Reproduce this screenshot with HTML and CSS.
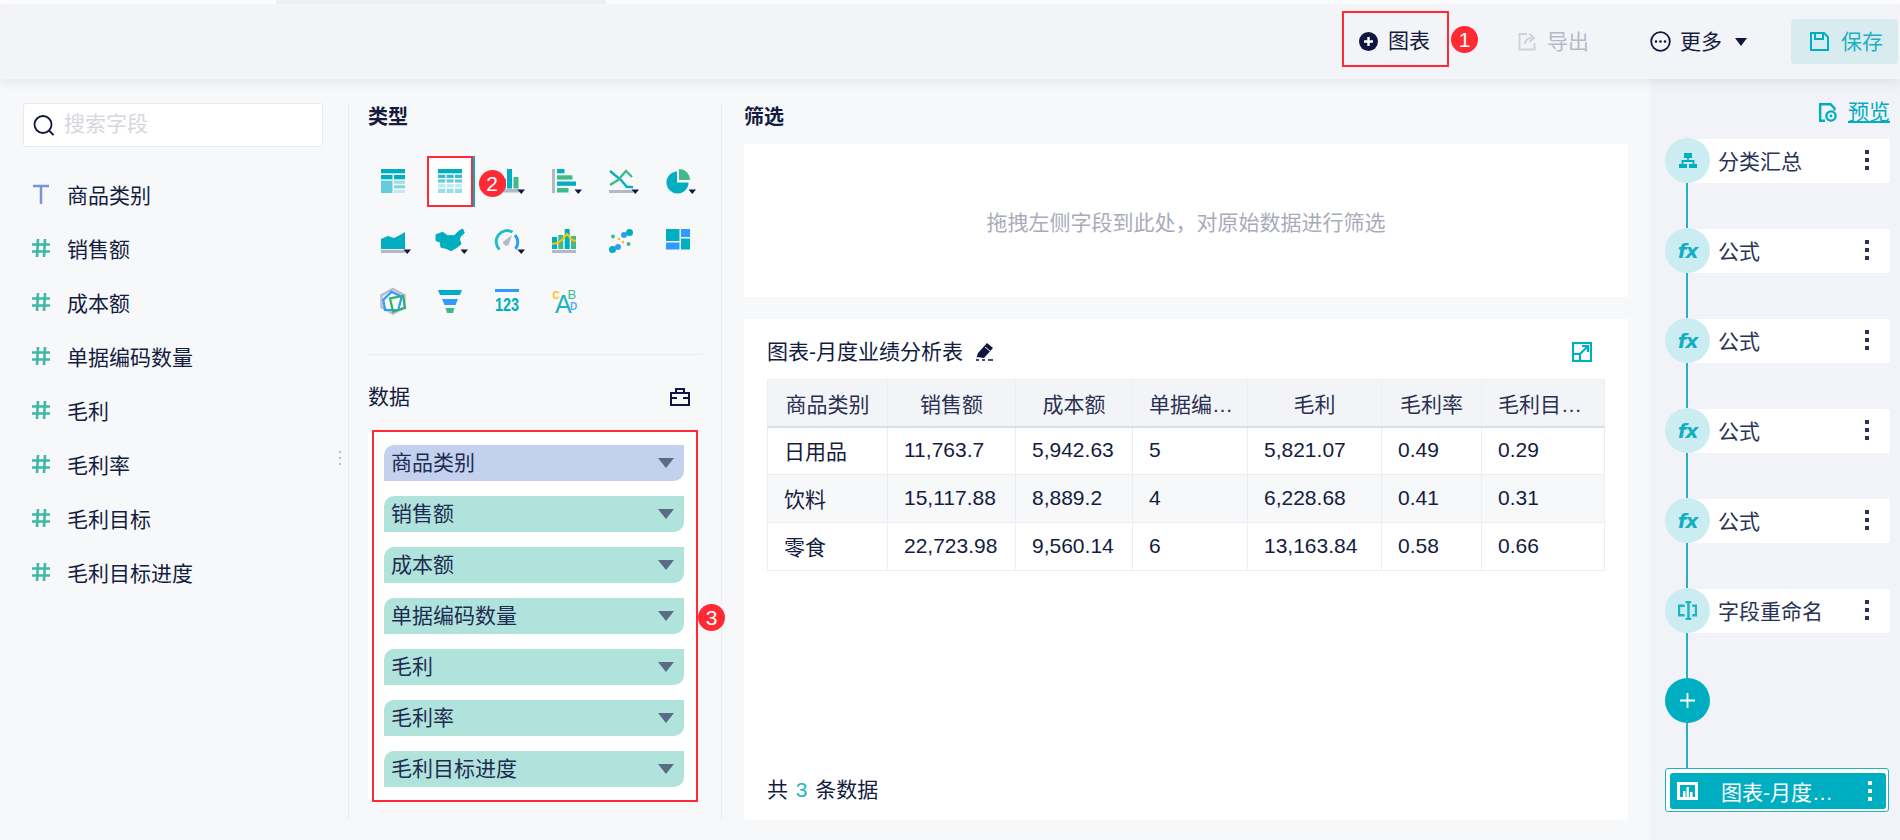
FILE: index.html
```html
<!DOCTYPE html>
<html lang="zh-CN">
<head>
<meta charset="utf-8">
<title>图表-月度业绩分析表</title>
<link rel="stylesheet" href="styles.css">
</head>
<body>
<div class="app">
  <div class="strip"><div class="strip-tab"></div></div>
  <header class="topbar">
    <button class="tool add">
      <svg class="ic-add" viewBox="0 0 19 19"><circle cx="9.5" cy="9.5" r="9.5" fill="#10163f"/><path d="M9.5 5v9M5 9.5h9" stroke="#fff" stroke-width="2.4"/></svg>
      <span>图表</span>
      <b class="badge badge-1">1</b>
    </button>
    <button class="tool export">
      <svg class="ic-export" viewBox="0 0 18 19" fill="none" stroke="#cfd2da" stroke-width="2"><path d="M9 2H1.500v15.500H16.500V11"/><path d="M7 12c0-4 2.500-6 7-6M11.500 2l4.500 4-4.500 4"/></svg>
      <span>导出</span>
    </button>
    <button class="tool more">
      <svg class="ic-more" viewBox="0 0 21 21"><circle cx="10.500" cy="10.500" r="9.300" fill="none" stroke="#10163f" stroke-width="1.800"/><circle cx="6" cy="10.500" r="1.300" fill="#10163f"/><circle cx="10.500" cy="10.500" r="1.300" fill="#10163f"/><circle cx="15" cy="10.500" r="1.300" fill="#10163f"/></svg>
      <span>更多</span>
      <i class="caret"></i>
    </button>
    <button class="tool save">
      <svg class="ic-save" viewBox="0 0 19 19" fill="none" stroke="#00aec1" stroke-width="2"><path d="M1 1h13l4 4v13H1z"/><path d="M5 1v6h8V1"/></svg>
      <span>保存</span>
    </button>
  </header>

  <div class="body">
    <div class="workspace">
      <aside class="fields">
        <div class="search">
          <svg class="ic-search" viewBox="0 0 21 21" fill="none" stroke="#10163f" stroke-width="1.800"><circle cx="10" cy="9.500" r="8.500"/><path d="M16 15.500l4.500 4.500"/></svg>
          <input class="search-input" placeholder="搜索字段">
        </div>
        <ul class="field-list">
          <li class="field"><svg class="ic-field" viewBox="0 0 18 20"><path d="M1 2h16M9 2v18" stroke="#7b93db" stroke-width="2.500" fill="none"/></svg>商品类别</li>
          <li class="field"><svg class="ic-field" viewBox="0 0 18 20"><path d="M6 1L5 19M13 1l-1 18M0 6.500h18M0 13.500h18" stroke="#3fb8a9" stroke-width="2.600" fill="none"/></svg>销售额</li>
          <li class="field"><svg class="ic-field" viewBox="0 0 18 20"><path d="M6 1L5 19M13 1l-1 18M0 6.500h18M0 13.500h18" stroke="#3fb8a9" stroke-width="2.600" fill="none"/></svg>成本额</li>
          <li class="field"><svg class="ic-field" viewBox="0 0 18 20"><path d="M6 1L5 19M13 1l-1 18M0 6.500h18M0 13.500h18" stroke="#3fb8a9" stroke-width="2.600" fill="none"/></svg>单据编码数量</li>
          <li class="field"><svg class="ic-field" viewBox="0 0 18 20"><path d="M6 1L5 19M13 1l-1 18M0 6.500h18M0 13.500h18" stroke="#3fb8a9" stroke-width="2.600" fill="none"/></svg>毛利</li>
          <li class="field"><svg class="ic-field" viewBox="0 0 18 20"><path d="M6 1L5 19M13 1l-1 18M0 6.500h18M0 13.500h18" stroke="#3fb8a9" stroke-width="2.600" fill="none"/></svg>毛利率</li>
          <li class="field"><svg class="ic-field" viewBox="0 0 18 20"><path d="M6 1L5 19M13 1l-1 18M0 6.500h18M0 13.500h18" stroke="#3fb8a9" stroke-width="2.600" fill="none"/></svg>毛利目标</li>
          <li class="field"><svg class="ic-field" viewBox="0 0 18 20"><path d="M6 1L5 19M13 1l-1 18M0 6.500h18M0 13.500h18" stroke="#3fb8a9" stroke-width="2.600" fill="none"/></svg>毛利目标进度</li>
        </ul>
        <span class="handle"></span>
      </aside>

      <section class="config">
        <h2 class="heading">类型</h2>
        <div class="types">
          <div class="type"><svg class="chart" viewBox="0 0 24 24"><rect class="t" width="24" height="4.300"/><rect class="t" y="6" width="11.500" height="4.300"/><rect class="t" x="13" y="6" width="11" height="4.300"/><rect class="t3" y="11.700" width="11.500" height="12.300"/><rect class="t5" x="13" y="11.700" width="11" height="3"/><rect class="t4" x="13" y="16.300" width="11" height="3"/><rect class="t6" x="13" y="21" width="11" height="3"/></svg></div>
          <div class="type"><div class="picked"><svg class="chart" viewBox="0 0 24 24"><rect class="t" width="24" height="4.300"/><rect class="t2" y="5.700" width="7.300" height="3.300"/><rect class="t2" x="8.600" y="5.700" width="7" height="3.300"/><rect class="t2" x="17" y="5.700" width="7" height="3.300"/><rect class="t3" y="10.300" width="7.300" height="3.300"/><rect class="t3" x="8.600" y="10.300" width="7" height="3.300"/><rect class="t3" x="17" y="10.300" width="7" height="3.300"/><rect class="t6" y="15" width="7.300" height="3.300"/><rect class="t6" x="8.600" y="15" width="7" height="3.300"/><rect class="t6" x="17" y="15" width="7" height="3.300"/><rect class="t5" y="19.700" width="7.300" height="4.300"/><rect class="t5" x="8.600" y="19.700" width="7" height="4.300"/><rect class="t5" x="17" y="19.700" width="7" height="4.300"/></svg><b class="badge badge-2">2</b></div></div>
          <div class="type"><svg class="chart" viewBox="0 0 24 24"><rect class="t" x="6" y="10" width="5" height="9.500"/><rect class="t" x="12" width="5" height="19.500"/><rect class="g" x="18.500" y="8" width="5" height="11.500"/><rect class="a" y="20" width="24" height="3.500"/><polygon class="n" points="22.500,20.500 30,20.500 26.250,25"/></svg></div>
          <div class="type"><svg class="chart" viewBox="0 0 24 24"><rect class="a" width="3" height="24"/><rect class="t" x="5" width="7.500" height="4.300"/><rect class="g" x="5" y="6.300" width="15.500" height="4.300"/><rect class="t" x="5" y="12.500" width="19" height="4.300"/><rect class="g" x="5" y="19" width="11.500" height="4.500"/><polygon class="n" points="22.500,20.500 30,20.500 26.250,25"/></svg></div>
          <div class="type"><svg class="chart" viewBox="0 0 24 24"><path d="M1 2l11 9 6 7h6" fill="none" stroke="#00aec1" stroke-width="2.400"/><path d="M1 16l8-5 8-9 6 6" fill="none" stroke="#3fbb8a" stroke-width="2.400"/><rect class="a" y="21" width="24" height="3"/><polygon class="n" points="22.500,20.500 30,20.500 26.250,25"/></svg></div>
          <div class="type"><svg class="chart" viewBox="0 0 24 24"><path class="t" d="M11 2.500A11 11 0 1 0 22.500 13.500H11z"/><path class="g" d="M13 0a11 11 0 0 1 11 11H13z"/><polygon class="n" points="22.500,20.500 30,20.500 26.250,25"/></svg></div>
          <div class="type"><svg class="chart" viewBox="0 0 24 24"><path class="t" d="M0 10l7-3 6 2 7-3.500 4-2.500v17H0z"/><rect class="a" y="21" width="24" height="3"/><polygon class="n" points="22.500,20.500 30,20.500 26.250,25"/></svg></div>
          <div class="type"><svg class="chart" viewBox="0 0 24 24"><path class="t map" d="M-2 5.700L4.700 3.300L9.700 6.700L16.300 6.700L21.300 1.700L24.700 0L26.300 4L23 6.700L21.300 10L23 15L19 18.300L13 21.700L8 19.300L3 18.300L2.300 13L-2 11.700Z"/><polygon class="n" points="22.500,20.500 30,20.500 26.250,25"/></svg></div>
          <div class="type"><svg class="chart" viewBox="0 0 24 24"><path d="M4.500 20.500A11 11 0 0 1 17.500 3" fill="none" stroke="#1fbdc9" stroke-width="3"/><path d="M20 6A11 11 0 0 1 20.500 20" fill="none" stroke="#2e9bff" stroke-width="3"/><path d="M8 13L17 6L13.500 16A3.500 3.500 0 0 1 8 13z" fill="#b4b7c5"/><polygon class="n" points="22.500,20.500 30,20.500 26.250,25"/></svg></div>
          <div class="type"><svg class="chart" viewBox="0 0 24 24"><rect class="t" y="8" width="5" height="12"/><rect class="g" x="6.300" y="6" width="5" height="14"/><rect class="t" x="12.700" width="5" height="20"/><rect class="g" x="19" y="7" width="5" height="13"/><path d="M0 15l5-1 5-3 5-6 5 6 4 1" fill="none" stroke="#ffc107" stroke-width="2"/><rect class="a" y="21" width="24" height="3"/></svg></div>
          <div class="type"><svg class="chart" viewBox="0 0 24 24"><circle class="t" cx="20.500" cy="3.500" r="3.500"/><circle cx="15" cy="6" r="3" fill="#2e9bff"/><circle class="t" cx="3.500" cy="20.500" r="3.500"/><circle cx="9" cy="18" r="3" fill="#2e9bff"/><circle class="g" cx="4" cy="7.500" r="2"/><circle class="g" cx="19.500" cy="15" r="2"/><circle cx="10" cy="10" r="1.300" fill="#ffc107"/><circle cx="14" cy="13" r="1.300" fill="#ffc107"/></svg></div>
          <div class="type"><svg class="chart" viewBox="0 0 24 24"><rect class="t" width="13.500" height="12"/><rect x="15" width="9" height="8" fill="#2e9bff"/><rect y="13.500" width="13.500" height="7" fill="#2e9bff"/><rect class="t" x="15" y="9.500" width="9" height="11"/></svg></div>
          <div class="type"><svg class="chart" viewBox="0 0 24 24" fill="none"><polygon points="12,0 23.500,6.300 23.500,18 12,24.500 0.500,18 0.500,6.300" stroke="#b9bcca" stroke-width="2.500"/><polygon points="10.700,2.700 20.700,7.700 17.300,21 4,21 2.300,11" stroke="#2e9bff" stroke-width="2.200"/><polygon points="9,9.300 22,7 24,19 12,22.500" stroke="#2eb46a" stroke-width="2.200"/></svg></div>
          <div class="type"><svg class="chart" viewBox="0 0 24 24"><polygon class="t" points="0,1 24,1 22,6 2,6"/><polygon points="4,10 20,10 17.500,16 6.500,16" fill="#2e9bff"/><polygon class="g" points="7.500,19 16.500,19 15,24 9,24"/></svg></div>
          <div class="type"><svg class="chart" viewBox="0 0 24 24"><rect width="24" height="3" fill="#2e9bff"/><text class="num" x="0" y="22" textLength="24" lengthAdjust="spacingAndGlyphs">123</text></svg></div>
          <div class="type"><svg class="chart" viewBox="0 0 24 24"><text class="abc-c" x="0.500" y="10.300">C</text><text class="abc-a" x="3" y="23.500">A</text><text class="abc-b" x="15.600" y="10.300">B</text><text class="abc-d" x="18" y="21">D</text></svg></div>
        </div>
        <hr class="rule">
        <div class="data-head">
          <h2 class="heading plain">数据</h2>
          <svg class="ic-box" viewBox="0 0 20 18" fill="none" stroke="#10163f" stroke-width="2"><path d="M1 5h18v12H1zM6 5V1h8v4M1 10h6M13 10h6"/></svg>
        </div>
        <div class="data-wrap">
          <div class="data-box">
            <div class="pill dim">商品类别<i class="pill-caret"></i></div>
            <div class="pill">销售额<i class="pill-caret"></i></div>
            <div class="pill">成本额<i class="pill-caret"></i></div>
            <div class="pill">单据编码数量<i class="pill-caret"></i></div>
            <div class="pill">毛利<i class="pill-caret"></i></div>
            <div class="pill">毛利率<i class="pill-caret"></i></div>
            <div class="pill">毛利目标进度<i class="pill-caret"></i></div>
            <b class="badge badge-3">3</b>
          </div>
        </div>
      </section>

      <section class="stage">
        <h2 class="heading">筛选</h2>
        <div class="filter">拖拽左侧字段到此处，对原始数据进行筛选</div>
        <div class="card">
          <div class="card-head">
            <span>图表-月度业绩分析表</span>
            <svg class="ic-edit" viewBox="0 0 20 18"><path d="M12 0l6 5-9 10-7-1-1 2 2-6z" fill="#10163f"/><path d="M10 4l5 4" stroke="#fff" stroke-width="1"/><path d="M1 17h3M7 17h3M13 17h5" stroke="#10163f" stroke-width="1.500"/></svg>
            <svg class="ic-expand" viewBox="0 0 20 20" fill="none" stroke="#00aec1" stroke-width="2.200"><rect x="1" y="1" width="18" height="18"/><path d="M1 12h7v7M8 12l8-8M10 4h6v6"/></svg>
          </div>
          <table class="grid">
            <colgroup><col class="c1"><col class="c2"><col class="c3"><col class="c4"><col class="c5"><col class="c6"><col class="c7"></colgroup>
            <thead><tr><th>商品类别</th><th>销售额</th><th>成本额</th><th class="clip">单据编码数量</th><th>毛利</th><th>毛利率</th><th class="clip">毛利目标进度</th></tr></thead>
            <tbody>
              <tr><td>日用品</td><td>11,763.7</td><td>5,942.63</td><td>5</td><td>5,821.07</td><td>0.49</td><td>0.29</td></tr>
              <tr><td>饮料</td><td>15,117.88</td><td>8,889.2</td><td>4</td><td>6,228.68</td><td>0.41</td><td>0.31</td></tr>
              <tr><td>零食</td><td>22,723.98</td><td>9,560.14</td><td>6</td><td>13,163.84</td><td>0.58</td><td>0.66</td></tr>
            </tbody>
          </table>
          <div class="total">共 <em>3</em> 条数据</div>
        </div>
      </section>
    </div>

    <aside class="flow">
      <a class="preview">
        <svg class="ic-preview" viewBox="0 0 19 19" fill="none" stroke="#00aec1" stroke-width="2.400"><path d="M6 17.800H1.200V1.200h10.300l4 4v2.300"/><circle cx="12" cy="13" r="4.600"/><circle cx="12" cy="13" r="1.400" fill="#00aec1" stroke="none"/></svg>
        <span>预览</span>
      </a>
      <div class="step">
        <span class="node"><svg class="ic-org" viewBox="0 0 18 15"><path d="M5 0h8v5H5zM0 11h8v4H0zM10 11h8v4h-8z" fill="#00aec1"/><path d="M9 5v3M3.500 11V8h11v3" fill="none" stroke="#00aec1" stroke-width="1.800"/></svg></span>
        <div class="step-card">分类汇总<i class="kebab"></i></div>
      </div>
      <span class="wire"></span>
      <div class="step"><span class="node fx">fx</span><div class="step-card">公式<i class="kebab"></i></div></div>
      <span class="wire"></span>
      <div class="step"><span class="node fx">fx</span><div class="step-card">公式<i class="kebab"></i></div></div>
      <span class="wire"></span>
      <div class="step"><span class="node fx">fx</span><div class="step-card">公式<i class="kebab"></i></div></div>
      <span class="wire"></span>
      <div class="step"><span class="node fx">fx</span><div class="step-card">公式<i class="kebab"></i></div></div>
      <span class="wire"></span>
      <div class="step">
        <span class="node"><svg class="ic-node" viewBox="0 0 20 20" fill="none" stroke="#1fb3c5" stroke-width="2.600"><path d="M7 5H1v10h6M15 5h4v10h-4M8 1h6M8 19h6M11 1v18"/></svg></span>
        <div class="step-card">字段重命名<i class="kebab"></i></div>
      </div>
      <span class="wire"></span>
      <button class="plus"><svg class="ic-plus" viewBox="0 0 15 15"><path d="M7.500 0v15M0 7.500h15" stroke="#fff" stroke-width="1.800"/></svg></button>
      <span class="wire"></span>
      <div class="output">
        <div class="output-in">
          <svg class="ic-out" viewBox="0 0 21 18"><path d="M0 0h21v18H0z" fill="#fff"/><path d="M3 3h15v12H3z" fill="#00aec1"/><path d="M6 9h2.500v6H6zM9.500 5h2.500v10H9.500zM13 10h2.500v5H13z" fill="#fff"/></svg>
          <span class="output-name">图表-月度业绩分析表</span>
          <i class="kebab light"></i>
        </div>
      </div>
    </aside>
  </div>
</div>
</body>
</html>
```
FILE: styles.css
```css
* { box-sizing: border-box; }
html, body { margin: 0; padding: 0; }
body {
  font-family: "Liberation Sans", "Noto Sans CJK SC", sans-serif;
  font-size: 21px;
  color: #141c40;
  background: #f7f8fa;
}
h2, ul { margin: 0; padding: 0; }
i, em { font-style: normal; }
button { font: inherit; color: inherit; background: none; border: 0; padding: 0; }

.app { width: 1900px; height: 840px; display: flex; flex-direction: column; overflow: hidden; }

.strip { height: 4px; background: #fff; flex: none; }
.strip-tab { width: 330px; height: 4px; margin-left: 276px; background: #f1f2f7; }

.topbar {
  position: relative;
  z-index: 3;
  height: 75px;
  flex: none;
  display: flex;
  align-items: center;
  justify-content: flex-end;
  padding-right: 2px;
  background: #f3f4f8;
  box-shadow: 0 3px 10px rgba(30, 40, 80, .09);
}
.tool { display: flex; align-items: center; line-height: 28px; }
.add {
  position: relative;
  width: 107px;
  height: 56px;
  margin-top: -5px;
  padding: 4px 0 0 15px;
  border: 2px solid #ff2a33;
  gap: 10px;
}
.ic-add { width: 19px; height: 19px; }
.export { margin-left: 69px; gap: 11px; color: #b6bac6; }
.ic-export { width: 18px; height: 19px; }
.more { margin-left: 61px; gap: 9px; }
.ic-more { width: 21px; height: 21px; }
.caret {
  width: 0; height: 0; margin-left: 4px;
  border-left: 6px solid transparent;
  border-right: 6px solid transparent;
  border-top: 8px solid #10163f;
}
.save {
  margin-left: 44px;
  width: 107px;
  height: 45px;
  padding-left: 19px;
  gap: 12px;
  color: #1cb0c3;
  background: #d8ecf0;
  border-radius: 4px;
}
.ic-save { width: 19px; height: 19px; }

.badge {
  position: absolute;
  z-index: 2;
  width: 27px;
  height: 27px;
  border-radius: 50%;
  background: #ff2a33;
  color: #fff;
  font-size: 21px;
  font-weight: 400;
  line-height: 27px;
  text-align: center;
}
.badge-1 { left: 107px; top: 13px; }
.badge-2 { left: 50px; top: 12px; }
.badge-3 { left: 324px; top: 172px; }

.body { flex: 1; min-height: 0; display: flex; }
.workspace { flex: 1; display: flex; padding: 24px 0 20px; min-width: 0; }

.fields { position: relative; width: 349px; flex: none; border-right: 1px solid #e9ebef; padding-left: 23px; }
.search {
  width: 300px;
  height: 44px;
  display: flex;
  align-items: center;
  gap: 10px;
  padding-left: 9px;
  background: #fff;
  border: 1px solid #e8e9ef;
  border-radius: 3px;
}
.ic-search { width: 21px; height: 21px; flex: none; }
.search-input { flex: 1; min-width: 0; margin-top: -3px; border: 0; outline: 0; padding: 0; background: none; font: inherit; }
.search-input::placeholder { color: #d5d7de; }
.field-list { list-style: none; margin-top: 20px; margin-left: 9px; }
.field { height: 54px; display: flex; align-items: center; gap: 17px; }
.ic-field { width: 18px; height: 20px; flex: none; }
.handle {
  position: absolute;
  left: 339px;
  top: 354px;
  width: 2px;
  height: 2px;
  background: #b9bcc6;
  box-shadow: 0 -6px 0 #b9bcc6, 0 6px 0 #b9bcc6;
}

.config { width: 373px; flex: none; border-right: 1px solid #e9ebef; padding-left: 19px; }
.heading { font-size: 20px; font-weight: 700; line-height: 28px; }
.heading.plain { font-size: 21px; font-weight: 400; }
.types {
  display: grid;
  grid-template-columns: repeat(6, 57px);
  grid-auto-rows: 60px;
  margin: 20px 0 0 -4px;
}
.type { display: flex; align-items: center; justify-content: center; }
.chart { width: 24px; height: 24px; overflow: visible; }
.picked {
  position: relative;
  width: 46px;
  height: 51px;
  display: flex;
  align-items: center;
  justify-content: center;
  background: #fff;
  border: 2px solid #ff2a33;
  box-shadow: 2px 0 0 #00aec1;
}
.t { fill: #00aec1; }
.t2 { fill: #2fbccb; }
.t3 { fill: #66ccd9; }
.t4 { fill: #7dd5dd; }
.t5 { fill: #99dfe6; }
.t6 { fill: #c0ecef; }
.g { fill: #3fbb8a; }
.a { fill: #b4b7c5; }
.n { fill: #10163f; }
.map { stroke: #00aec1; stroke-width: 1; stroke-linejoin: round; }
.num { font: 700 19px "Liberation Sans", sans-serif; fill: #00aec1; }
.abc-a { font: 400 25px "Liberation Sans", sans-serif; fill: #1fb3c5; }
.abc-b { font: 400 13px "Liberation Sans", sans-serif; fill: #3fbb8a; }
.abc-c { font: 700 10px "Liberation Sans", sans-serif; fill: #ffc107; }
.abc-d { font: 700 10px "Liberation Sans", sans-serif; fill: #5aa9ff; }

.rule { width: 334px; height: 1px; margin: 23px 0 0; border: 0; background: #eaecf0; }
.data-head { width: 322px; display: flex; align-items: center; justify-content: space-between; margin-top: 28px; }
.ic-box { width: 20px; height: 18px; }
.data-wrap { width: 330px; margin-top: 19px; padding: 0 0 1px 4px; background: #fff; }
.data-box {
  position: relative;
  width: 326px;
  height: 372px;
  display: flex;
  flex-direction: column;
  gap: 15px;
  padding: 13px 0 0 10px;
  border: 2px solid #ff2a33;
}
.pill {
  width: 300px;
  height: 36px;
  flex: none;
  display: flex;
  align-items: center;
  justify-content: space-between;
  padding: 0 10px 0 7px;
  line-height: 36px;
  background: #afe3dc;
  border-radius: 10px 0 10px 0;
  color: #1f2b50;
}
.pill.dim { background: #c3d1ef; }
.pill-caret {
  width: 0; height: 0;
  border-left: 8px solid transparent;
  border-right: 8px solid transparent;
  border-top: 10px solid #5a6b85;
}

.stage { width: 884px; flex: none; margin-left: 22px; display: flex; flex-direction: column; }
.filter {
  height: 153px;
  margin-top: 13px;
  display: flex;
  align-items: center;
  justify-content: center;
  background: #fff;
  color: #a9acb8;
}
.card {
  flex: 1;
  min-height: 0;
  margin-top: 22px;
  padding: 20px 23px 17px;
  display: flex;
  flex-direction: column;
  background: #fff;
}
.card-head { height: 26px; display: flex; align-items: center; line-height: 26px; width: 825px; }
.ic-edit { width: 20px; height: 18px; margin-left: 12px; }
.ic-expand { width: 20px; height: 20px; margin-left: auto; }
.grid { width: 837px; margin-top: 14px; table-layout: fixed; border-collapse: collapse; }
.c1 { width: 120px; } .c2 { width: 128px; } .c3 { width: 117px; } .c4 { width: 115px; }
.c5 { width: 134px; } .c6 { width: 100px; } .c7 { width: 123px; }
.grid th, .grid td {
  height: 48px;
  border: 1px solid #eceef2;
  white-space: nowrap;
  overflow: hidden;
  text-overflow: ellipsis;
  font-weight: 400;
}
.grid th { height: 47px; padding: 0 12px; background: #f3f4f8; border-bottom: 2px solid #dcdee5; text-align: center; color: #2a3050; }
.grid th.clip { padding: 0 10px 0 16px; }
.grid td { padding: 0 16px 2px; text-align: left; }
.grid tbody tr:nth-child(2) td { background: #f7f8fa; }
.total { margin-top: auto; line-height: 26px; }
.total em { color: #1fb3c5; margin: 0 2px; }

.flow { width: 250px; flex: none; padding: 20px 10px 0 15px; background: #f1f3f8; display: flex; flex-direction: column; align-items: flex-start; }
.preview { height: 26px; margin-bottom: 13px; display: flex; align-items: center; gap: 10px; align-self: flex-end; color: #00aec1; line-height: 24px; }
.preview span { text-decoration: underline; }
.ic-preview { width: 19px; height: 19px; }
.step { width: 225px; height: 45px; display: flex; align-items: flex-end; flex: none; }
.node {
  position: relative;
  z-index: 1;
  width: 45px;
  height: 45px;
  flex: none;
  display: flex;
  align-items: center;
  justify-content: center;
  border-radius: 50%;
  background: #cbedf2;
}
.ic-node { width: 19px; height: 19px; }
.ic-org { width: 18px; height: 15px; }
.fx { font: italic 700 20px "DejaVu Sans", sans-serif; letter-spacing: -1px; color: #12aec1; }
.step-card {
  height: 44px;
  flex: 1;
  margin-left: -17px;
  padding: 0 21px 2px 25px;
  display: flex;
  align-items: center;
  justify-content: space-between;
  background: #fff;
  border-radius: 0 3px 3px 0;
  color: #2a3355;
}
.kebab {
  width: 4px;
  height: 4px;
  flex: none;
  color: #2a3355;
  background: currentColor;
  box-shadow: 0 -8px 0 currentColor, 0 8px 0 currentColor;
}
.kebab.light { color: #fff; margin-left: auto; }
.wire { width: 2px; height: 45px; margin-left: 21px; flex: none; background: #1fb3c5; }
.plus { width: 45px; height: 45px; flex: none; border-radius: 50%; background: #00aec1; display: flex; align-items: center; justify-content: center; }
.ic-plus { width: 15px; height: 15px; }
.output {
  width: 224px;
  height: 44px;
  flex: none;
  padding: 4px 2px 2px 4px;
  background: #fff;
  border: 1px solid #1fb3c5;
  border-radius: 3px;
}
.output-in {
  height: 36px;
  display: flex;
  align-items: center;
  padding: 0 14px 0 7px;
  background: #00aec1;
  border-radius: 3px;
  color: #fff;
}
.ic-out { width: 21px; height: 18px; flex: none; }
.output-name { width: 114px; margin-left: 23px; flex: none; white-space: nowrap; overflow: hidden; text-overflow: ellipsis; }
```
